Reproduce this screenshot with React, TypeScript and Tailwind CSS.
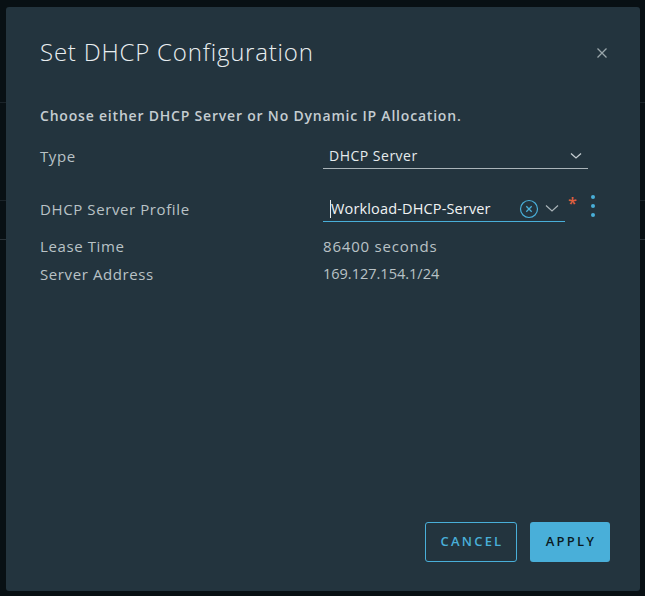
import React from "react";

export default function App() {
  const font = { fontFamily: '"Open Sans", "Noto Sans", sans-serif' };
  return (
    <div className="relative w-[645px] h-[596px] bg-[#081014] overflow-hidden" style={font}>
      {/* backdrop faint lines */}
      <div className="absolute left-0 right-0 top-[102px] h-px bg-[#1a2329]" />
      <div className="absolute left-0 right-0 top-[200px] h-px bg-[#1a2329]" />
      <div className="absolute left-0 right-0 top-[239px] h-px bg-[#2a3339]" />
      <div className="absolute left-[6px] top-[7px] w-[634px] h-[584px] bg-[#23343e] rounded-[3px] flex flex-col pl-[34px] pr-[30px]">
        <div className="flex items-start justify-between pt-[30px]">
          <h1 className="text-[24px] leading-[30px] font-light text-[#e9eef0] tracking-[0.8px]">Set DHCP Configuration</h1>
          <svg className="mt-[10px] mr-[2px]" width="12" height="12" viewBox="0 0 12 12">
            <path d="M1.5 1.5 L10.5 10.5 M10.5 1.5 L1.5 10.5" stroke="#9aa6ab" strokeWidth="1.3" />
          </svg>
        </div>
        <p className="mt-[39px] text-[14px] leading-[20px] font-semibold text-[#c5cdd1] tracking-[0.8px]">
          Choose either DHCP Server or No Dynamic IP Allocation.
        </p>
        <div className="mt-[13px] flex items-center h-[34px]">
          <div className="w-[283px] text-[15px] text-[#b9c2c6] tracking-[0.6px]">Type</div>
          <div className="w-[265px] h-[26px] border-b border-[#aab4b9] flex items-center justify-between pl-[6px] pr-[6px]">
            <span className="text-[14px] font-medium text-[#e6ebed] tracking-[0.5px]">DHCP Server</span>
            <svg width="12" height="8" viewBox="0 0 12 8">
              <path d="M1 1.5 L6 6 L11 1.5" stroke="#c5cdd1" strokeWidth="1.3" fill="none" />
            </svg>
          </div>
        </div>
        <div className="mt-[19px] flex items-center h-[34px]">
          <div className="w-[283px] text-[15px] text-[#b9c2c6] tracking-[0.6px]">DHCP Server Profile</div>
          <div className="w-[242px] h-[26px] border-b border-[#49afd9] flex items-center pl-[7px] pr-[6px]">
            <span className="w-px h-[18px] bg-[#e6ebed]" />
            <span className="text-[14.5px] text-[#f0f3f4] tracking-[0.15px]">Workload-DHCP-Server</span>
            <span className="flex-1" />
            <svg width="20" height="20" viewBox="0 0 20 20">
              <circle cx="10" cy="10" r="8.5" stroke="#49afd9" strokeWidth="1.2" fill="none" />
              <path d="M7.3 7.3 L12.7 12.7 M12.7 7.3 L7.3 12.7" stroke="#49afd9" strokeWidth="1.3" />
            </svg>
            <svg className="ml-[6px]" width="14" height="9" viewBox="0 0 14 9">
              <path d="M1 1.5 L7 7 L13 1.5" stroke="#aab4b9" strokeWidth="1.2" fill="none" />
            </svg>
          </div>
          <span className="ml-[3px] -mt-[12px] text-[16px] leading-none text-[#e0603f] font-semibold">*</span>
          <div className="ml-[14px] -mt-[6px] flex flex-col gap-[5px]">
            <span className="w-[4px] h-[4px] rounded-full bg-[#49afd9]" />
            <span className="w-[4px] h-[4px] rounded-full bg-[#49afd9]" />
            <span className="w-[4px] h-[4px] rounded-full bg-[#49afd9]" />
          </div>
        </div>
        <div className="mt-[6px] flex items-center h-[28px]">
          <div className="w-[283px] text-[15px] text-[#b9c2c6] tracking-[0.6px]">Lease Time</div>
          <div className="text-[15px] text-[#b9c2c6] tracking-[0.8px]">86400 seconds</div>
        </div>
        <div className="flex items-center h-[28px]">
          <div className="w-[283px] text-[15px] text-[#b9c2c6] tracking-[0.6px]">Server Address</div>
          <div className="text-[14.5px] text-[#b9c2c6]">169.127.154.1/24</div>
        </div>
        <div className="flex-1" />
        <div className="flex justify-end gap-[13px] mb-[29px]">
          <button className="w-[92px] h-[40px] rounded-[3px] border border-[#49afd9] text-[#49afd9] text-[13px] font-semibold tracking-[2.2px] pl-[2px]">
            CANCEL
          </button>
          <button className="w-[80px] h-[40px] rounded-[3px] bg-[#49afd9] text-[#0b1a22] text-[13px] font-semibold tracking-[2.2px] pl-[2px]">
            APPLY
          </button>
        </div>
      </div>
    </div>
  );
}
